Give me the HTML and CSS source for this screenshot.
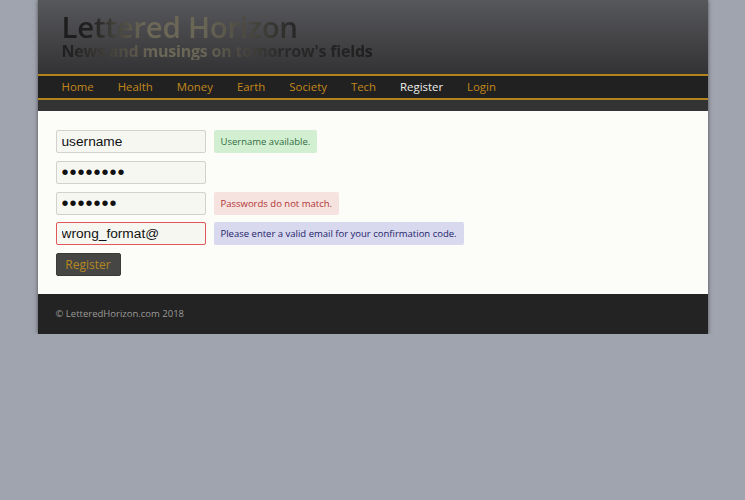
FILE: index.html
```html
<!DOCTYPE html>
<html>
<head>
<meta charset="utf-8">
<link rel="stylesheet" href="styles.css">
</head>
<body>
<div class="page">
  <header class="masthead">
    <h1 class="title">Lettered Horizon</h1>
    <p class="tagline">News and musings on tomorrow's fields</p>
  </header>
  <nav class="nav">
    <a class="nav-item">Home</a>
    <a class="nav-item">Health</a>
    <a class="nav-item">Money</a>
    <a class="nav-item">Earth</a>
    <a class="nav-item">Society</a>
    <a class="nav-item">Tech</a>
    <a class="nav-item active">Register</a>
    <a class="nav-item">Login</a>
  </nav>
  <div class="strip"></div>
  <main class="content">
    <form class="form">
      <div class="row">
        <input class="field" type="text" value="username">
        <span class="msg ok">Username available.</span>
      </div>
      <div class="row">
        <input class="field secret" type="password" value="12345678">
      </div>
      <div class="row">
        <input class="field secret" type="password" value="1234567">
        <span class="msg bad">Passwords do not match.</span>
      </div>
      <div class="row">
        <input class="field invalid" type="text" value="wrong_format@">
        <span class="msg info">Please enter a valid email for your confirmation code.</span>
      </div>
      <div class="row">
        <button class="btn" type="button">Register</button>
      </div>
    </form>
  </main>
  <footer class="footer">© LetteredHorizon.com 2018</footer>
</div>
</body>
</html>
```
FILE: styles.css
```css
html, body {
  margin: 0;
  padding: 0;
  background: #a0a4ae;
}
body {
  font-family: "Open Sans", "DejaVu Sans", sans-serif;
}
.page {
  width: 670px;
  margin: 0 auto;
  box-shadow: 0 0 4px rgba(0, 0, 0, 0.55);
}
.masthead {
  height: 74px;
  box-sizing: border-box;
  padding: 12px 0 0 24px;
  background: linear-gradient(#57585c, #333335);
}
.title {
  margin: 0;
  font-family: "Open Sans", sans-serif;
  font-weight: 600;
  font-size: 29.5px;
  line-height: 30px;
  letter-spacing: -0.3px;
  display: block;
  width: fit-content;
  background: linear-gradient(90deg, #1c1c1c 0%, #202020 12%, #6d6858 35%, #6a6656 60%, #262626 100%);
  -webkit-background-clip: text;
  background-clip: text;
  color: transparent;
}
.tagline {
  margin: 0;
  font-family: "Open Sans", sans-serif;
  font-weight: 700;
  font-size: 16px;
  line-height: 18px;
  letter-spacing: -0.2px;
  display: block;
  width: fit-content;
  background: linear-gradient(90deg, #1e1e1e 0%, #222 4%, #6d6858 30%, #6a6656 45%, #2a2a2a 70%, #1e1e1e 100%);
  -webkit-background-clip: text;
  background-clip: text;
  color: transparent;
}
.nav {
  display: flex;
  height: 22px;
  align-items: center;
  padding-left: 12px;
  background: #212121;
  border-top: 2px solid #b3831d;
  border-bottom: 2px solid #b3831d;
}
.nav-item {
  padding: 0 12px;
  font-size: 11.4px;
  color: #c2881c;
  line-height: 22px;
}
.nav-item.active {
  color: #eeeeea;
}
.strip {
  height: 11px;
  background: #333333;
}
.content {
  background: #fcfcf8;
  padding: 19px 18px 18px;
}
.form {
  display: flex;
  flex-direction: column;
  gap: 7.75px;
}
.row {
  display: flex;
  align-items: center;
  gap: 8px;
  height: 23px;
}
.field {
  width: 150px;
  height: 23px;
  box-sizing: border-box;
  margin: 0;
  padding: 0 5px;
  border: 1px solid #d2d2cc;
  border-radius: 2px;
  background: #f7f7f2;
  font-family: "Liberation Sans", Arial, sans-serif;
  font-size: 13.7px;
  color: #111;
}
.field.secret {
  font-size: 20px;
  letter-spacing: 1px;
}
.field.invalid {
  border-color: #e2585a;
}
.msg {
  height: 23px;
  line-height: 24px;
  padding: 0 7px;
  border-radius: 2px;
  font-size: 9.5px;
}
.msg.ok {
  background: #d3efd2;
  color: #2f6d3e;
}
.msg.bad {
  background: #f6e2de;
  color: #b03434;
}
.msg.info {
  background: #d8d8ee;
  color: #23256a;
}
.btn {
  height: 23px;
  width: 65px;
  padding: 0;
  border: 1px solid #3a3a38;
  border-radius: 2px;
  background: #464644;
  color: #b8861e;
  font-family: "Open Sans", sans-serif;
  font-size: 12px;
}
.footer {
  height: 40px;
  line-height: 40px;
  padding-left: 18px;
  background: #232323;
  color: #9a9a98;
  font-size: 9.5px;
}
```
